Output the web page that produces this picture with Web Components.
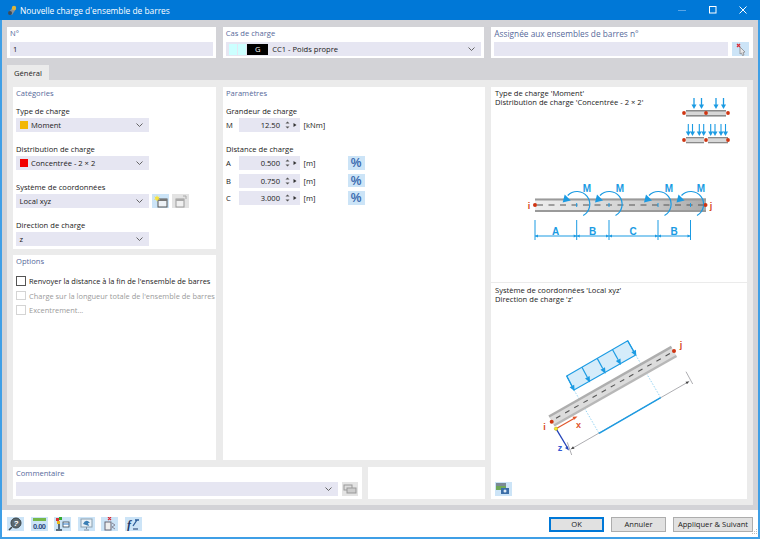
<!DOCTYPE html>
<html lang="fr"><head><meta charset="utf-8"><title>Nouvelle charge</title>
<style>html,body{margin:0;padding:0;width:760px;height:539px;overflow:hidden;background:#fff;font:7.6px "Open Sans","Liberation Sans",sans-serif;color:#1a1a1a}
svg{display:block}</style></head><body>
<x-win>
 <x-card slot="top" heading="N°" style="width:209px"><x-field value="1"></x-field></x-card>
 <x-card slot="top" heading="Cas de charge" style="width:262px">
  <x-combo><x-swatch c="#ccffff" w="8"></x-swatch><x-swatch c="#ccffff" w="8"></x-swatch><x-swatch c="#000" w="21" t="G"></x-swatch><span style="margin-left:3px">CC1 - Poids propre</span></x-combo>
 </x-card>
 <x-card slot="top" heading="Assignée aux ensembles de barres n°" style="width:262px;font-size:8.300px">
  <div style="display:flex;gap:4px"><x-field style="width:234px"></x-field><x-tool w="17" h="14"><svg width="15" height="13" viewBox="0 0 15 13"><path d="M4 1l3 3M7 1L4 4" stroke="#d8303a" stroke-width="1.3"/><path d="M7 4l5 5-2 .5 1 2.5-1.5.5-1-2.5L7 11z" fill="#e8e8ea" stroke="#8a8a8e" stroke-width=".8"/></svg></x-tool></div>
 </x-card>

 <x-card slot="cat" heading="Catégories" style="height:162px" gapless>
  <x-labeled label="Type de charge"><x-combo width="133"><x-swatch c="#f2b705" w="8" h="8"></x-swatch><span style="margin-left:2.500px">Moment</span></x-combo></x-labeled>
  <x-labeled label="Distribution de charge"><x-combo width="133"><x-swatch c="#f20000" w="8" h="8"></x-swatch><span style="margin-left:2.500px">Concentrée - 2 × 2</span></x-combo></x-labeled>
  <x-labeled label="Système de coordonnées"><div style="display:flex;gap:3px"><x-combo width="133"><span>Local xyz</span></x-combo>
    <x-tool w="17" h="14"><svg width="15" height="13" viewBox="0 0 15 13"><rect x="5" y="4" width="9" height="8" fill="#eef2f6" stroke="#555"/><rect x="5" y="4" width="9" height="2" fill="#777"/><path d="M4 0l.8 2 2-.6-1.2 1.8L7 5 5 4.600 4 6.500 3 4.600 1 5l1.400-1.800L1.200 1.400l2 .6z" fill="#f7e33c"/></svg></x-tool>
    <x-tool w="17" h="14" off><svg width="15" height="13" viewBox="0 0 15 13"><rect x="3" y="4" width="8" height="8" fill="#f0f0f0" stroke="#9b9b9b"/><rect x="3" y="4" width="8" height="2" fill="#aaa"/><path d="M10 1h3v3" fill="none" stroke="#aaa"/></svg></x-tool></div></x-labeled>
  <x-labeled label="Direction de charge"><x-combo width="133"><span>z</span></x-combo></x-labeled>
 </x-card>
 <x-card slot="opt" heading="Options" style="flex:1" gapless>
  <div style="display:flex;flex-direction:column;padding-top:1.500px;font-size:7.450px">
  <x-check active>Renvoyer la distance à la fin de l'ensemble de barres</x-check>
  <x-check>Charge sur la longueur totale de l'ensemble de barres</x-check>
  <x-check>Excentrement...</x-check></div>
 </x-card>
 <x-card slot="par" heading="Paramètres" style="flex:1" gapless>
  <x-labeled label="Grandeur de charge"><x-spin sym="M" value="12.50" unit="[kNm]"></x-spin></x-labeled>
  <x-labeled label="Distance de charge"><div style="display:flex;flex-direction:column;gap:3.500px">
   <x-spin sym="A" value="0.500" unit="[m]" pct></x-spin>
   <x-spin sym="B" value="0.750" unit="[m]" pct></x-spin>
   <x-spin sym="C" value="3.000" unit="[m]" pct></x-spin></div></x-labeled>
 </x-card>
 <x-card slot="com" heading="Commentaire" style="width:349px;height:32px">
  <div style="display:flex;gap:4px"><x-combo width="322" style="height:14px"></x-combo><x-tool w="16" h="14" off><svg width="14" height="12" viewBox="0 0 14 12"><rect x="1" y="2" width="8" height="5" fill="#ddd" stroke="#999"/><rect x="4" y="5" width="9" height="5" fill="#ccc" stroke="#999"/></svg></x-tool></div>
 </x-card>
 <x-card slot="com" style="width:117px;height:32px"></x-card>

 <x-load-diagram slot="dia"></x-load-diagram>
 <x-axes-diagram slot="dia"></x-axes-diagram>

 <x-tool slot="foot" w="17" h="14"><svg width="15" height="14" viewBox="0 0 15 14"><circle cx="8" cy="6" r="5" fill="#5c6a70" stroke="#3c464a"/><path d="M4 10l-3 3" stroke="#3c464a" stroke-width="1.600"/><text x="8" y="9" font-family="Liberation Sans" font-weight="700" font-style="italic" font-size="8" fill="#fff" text-anchor="middle">?</text></svg></x-tool>
 <x-tool slot="foot" w="17" h="14"><svg width="15" height="14" viewBox="0 0 15 14"><rect x="1" y="1" width="13" height="3" fill="#76b84a"/><text x="1" y="12" font-family="Liberation Sans" font-weight="700" font-size="7.500" fill="#2d4a80" textLength="13">0.00</text></svg></x-tool>
 <x-tool slot="foot" w="17" h="14"><svg width="15" height="14" viewBox="0 0 15 14"><rect x="1" y="1" width="3" height="3" fill="#d33"/><rect x="4" y="0" width="3" height="3" fill="#3a3"/><rect x="2" y="4" width="3" height="3" fill="#e8b820"/><path d="M4 7v5M1 13h6" stroke="#345" stroke-width="1.500"/><rect x="8" y="5" width="6" height="5" fill="#fff" stroke="#345" stroke-width=".8"/><path d="M8 7h6" stroke="#2a78c8"/></svg></x-tool>
 <x-tool slot="foot" w="17" h="14"><svg width="15" height="14" viewBox="0 0 15 14"><rect x="2" y="2" width="11" height="8" fill="#eaf2f8" stroke="#8ba0b0"/><path d="M4 7q3-6 7-1l-2 0 1 3" fill="#3b7fb5"/><path d="M7.500 10v2M5 13h5" stroke="#8090a0"/></svg></x-tool>
 <x-tool slot="foot" w="17" h="14"><svg width="15" height="14" viewBox="0 0 15 14"><path d="M6 0l3 3M9 0L6 3" stroke="#d82a35" stroke-width="1.200"/><rect x="3" y="5" width="6" height="8" fill="#eee" stroke="#667"/><path d="M10 6l3 2-3 2M10 10l3 2" stroke="#889" fill="none"/></svg></x-tool>
 <x-tool slot="foot" w="17" h="14"><svg width="15" height="14" viewBox="0 0 15 14"><text x="1" y="12" font-family="Liberation Serif" font-style="italic" font-weight="700" font-size="12" fill="#1c3a6a">f</text><path d="M7 9l4-6M9 3h4" stroke="#2b5c98" stroke-width="1.300"/><path d="M7 12h5" stroke="#1c3a6a"/></svg></x-tool>
 <x-button slot="act" w="55" primary>OK</x-button>
 <x-button slot="act" w="55">Annuler</x-button>
 <x-button slot="act" w="80">Appliquer &amp; Suivant</x-button>
</x-win>
<script>
function def(name, css, html, init){
  customElements.define(name, class extends HTMLElement{
    connectedCallback(){
      if(this.shadowRoot) return;
      const r=this.attachShadow({mode:'open'});
      const a=k=>this.getAttribute(k);
      r.innerHTML='<style>'+css+'</style>'+(typeof html==='function'?html(a,this):html);
      if(init) init(r,this);
    }
  });
}
const chevron='<svg width="7" height="4" viewBox="0 0 7 4" style="display:block"><path d="M.5 .5L3.500 3.500 6.500 .5" fill="none" stroke="#555" stroke-width=".9"/></svg>';

def('x-win',`:host{display:flex;flex-direction:column;width:760px;height:539px;box-sizing:border-box;border:2px solid #3f9fe6;border-top:0;background:#d3d3d7}
 .tb{height:20px;margin:0 -2px;background:#0078d7;display:flex;align-items:center;color:#fff;font:8.4px "Open Sans",sans-serif;flex:none}
 .tb .ic{margin:0 3px 0 7px}
 .tb .sp{flex:1}
 .ctl{display:flex;align-items:center}
 .body{flex:1;display:flex;flex-direction:column;padding:7px 5px 0 5px;min-height:0}
 .top{display:flex;gap:7px;height:31px}
 .top ::slotted(:last-child){margin-left:-1px}
 .tabbar{height:15px;margin-top:7px;display:flex;align-items:flex-end}
 .tab{width:42px;height:15px;background:#ebebeb;color:#222;display:flex;align-items:center;justify-content:center}
 .panel{height:425px;background:#ebebeb;padding:7px 6px 6px 6px;box-sizing:border-box;display:flex;gap:6px}
 .left{width:472px;display:flex;flex-direction:column;gap:7px}
 .cols{flex:1;display:flex;gap:7px;min-height:0}
 .c1{width:203px;display:flex;flex-direction:column;gap:6px}
 .c2{flex:1;display:flex}
 .c2 ::slotted(*){flex:1}
 .com{display:flex;gap:6px;height:32px}
 .dia{width:256px;display:flex;flex-direction:column;gap:1px;background:#ebebeb;height:412px}
 .foot{height:27px;margin:5px -5px 0;background:#fff;display:flex;align-items:center;padding:0 5px;box-sizing:border-box;position:relative}
 .tools{display:flex;gap:6.600px;flex:1}
 .acts{display:flex;gap:7px;margin-top:1.500px}
 .grip{position:absolute;right:0;bottom:0}`,
 `<div class="tb"><svg class="ic" width="10" height="11" viewBox="0 0 10 11"><path d="M1 8l5-6 3 2-4 6z" fill="#8a9198"/><circle cx="7" cy="3" r="2.200" fill="#d9b53c"/><circle cx="3" cy="8" r="2" fill="#3a4a5a"/></svg><span>Nouvelle charge d'ensemble de barres</span><span class="sp"></span>
 <div class="ctl"><svg width="76" height="20" viewBox="0 0 76 20"><path d="M0 10.500h8" stroke="#5aa5e6" stroke-width="1"/><rect x="31.500" y="6.500" width="6.500" height="6.500" fill="none" stroke="#fff" stroke-width="1"/><path d="M61.500 6.500l7 7M68.500 6.500l-7 7" stroke="#fff" stroke-width="1"/></svg><span style="width:6px"></span></div></div>
 <div class="body">
  <div class="top"><slot name="top"></slot></div>
  <div class="tabbar"><div class="tab">Général</div></div>
  <div class="panel">
   <div class="left">
    <div class="cols"><div class="c1"><slot name="cat"></slot><slot name="opt"></slot></div><div class="c2"><slot name="par"></slot></div></div>
    <div class="com"><slot name="com"></slot></div>
   </div>
   <div class="dia"><slot name="dia"></slot></div>
  </div>
  <div class="foot"><div class="tools"><slot name="foot"></slot></div><div class="acts"><slot name="act"></slot></div>
   <svg class="grip" width="8" height="8" viewBox="0 0 8 8" fill="#bbb"><rect x="6" y="0" width="1" height="1"/><rect x="4" y="2" width="1" height="1"/><rect x="6" y="2" width="1" height="1"/><rect x="2" y="4" width="1" height="1"/><rect x="4" y="4" width="1" height="1"/><rect x="6" y="4" width="1" height="1"/></svg></div>
 </div>`);

def('x-card',`:host{display:flex;flex-direction:column;background:#fff;padding:0 3px 3px;box-sizing:border-box}
 .h{height:12px;line-height:13px;color:#56699a;white-space:nowrap}
 :host(:not([gapless])) .h{margin-bottom:3px;}
 .w{display:flex;flex-direction:column}
 :host([gapless]) .w{padding-top:5px;gap:10px}`,
 a=>`${a('heading')?`<div class="h">${a('heading')}</div>`:''}<div class="w"><slot></slot></div>`);

def('x-labeled',`:host{display:block}.l{height:13px;line-height:14px;margin-bottom:1px;white-space:nowrap}`,
 a=>`<div class="l">${a('label')}</div><slot></slot>`);

def('x-field',`:host{display:block;height:14px;line-height:14px;background:#e6e6f2;padding-left:3px;box-sizing:border-box}`,
 a=>`${a('value')||''}`);

def('x-combo',`:host{display:flex;align-items:center;height:14px;background:#e6e6f2;box-sizing:border-box;padding:0 6px 0 3.500px;white-space:nowrap}
 .s{flex:1;display:flex;align-items:center;min-width:0}`,
 (a,h)=>{ if(a('width')) h.style.width=a('width')+'px'; return `<div class="s"><slot></slot></div>${chevron}`; });

def('x-swatch',`:host{display:flex;align-items:center;justify-content:center;color:#fff;height:11px;margin-right:1px;flex:none}`,
 (a,h)=>{ h.style.width=a('w')+'px'; h.style.background=a('c'); if(a('h')) h.style.height=a('h')+'px'; return a('t')||''; });

def('x-spin',`:host{display:flex;align-items:center;height:14px;white-space:nowrap}
 .sym{width:13px}
 .box{width:61px;height:14px;background:#e6e6f2;display:flex;align-items:center;box-sizing:border-box;padding-right:2px}
 .v{flex:1;text-align:right}
 .ar{margin-left:4px}
 .u{margin-left:3.500px;width:44px}
 .p{width:17px;height:13.500px;background:#cce4f7;color:#3d6cb0;font:700 12px "Liberation Sans",sans-serif;display:flex;align-items:center;justify-content:center}`,
 a=>`<span class="sym">${a('sym')}</span><div class="box"><span class="v">${a('value')}</span><svg class="ar" width="14" height="10" viewBox="0 0 14 10"><path d="M1.500 3.500L3.500 1.500 5.500 3.500zM1.500 6.500L3.500 8.500 5.500 6.500z" fill="#555"/><path d="M9.500 3l3 2-3 2z" fill="#333"/></svg></div><span class="u">${a('unit')}</span>${a('pct')!==null?'<div class="p">%</div>':''}`);

def('x-check',`:host{display:flex;align-items:center;height:14.700px;gap:3.500px;color:#9a9a9a;white-space:nowrap}
 :host([active]){color:#222}
 .b{width:7.500px;height:7.500px;border:1px solid #d4d4d4;background:#fff;flex:none}
 :host([active]) .b{border-color:#555;}`,`<div class="b"></div><slot></slot>`);

def('x-tool',`:host{display:flex;align-items:center;justify-content:center;background:#cce4f7;flex:none}
 :host([off]){background:#e3e3e3}`,
 (a,h)=>{ h.style.width=a('w')+'px'; h.style.height=a('h')+'px'; return '<slot></slot>'; });

def('x-button',`:host{display:flex;align-items:center;justify-content:center;height:15px;background:#e1e1e1;border:1px solid #adadad;box-sizing:border-box;white-space:nowrap}
 :host([primary]){border:2px solid #0078d7}`,
 (a,h)=>{ h.style.width=a('w')+'px'; return '<slot></slot>'; });

const BL='#1b9be3', RD='#cf3512';
const diaCss=`:host{display:block;position:relative;background:#fff;flex:none}
 .t{position:absolute;left:4px;line-height:9px;white-space:nowrap;color:#222}
 svg{display:block;position:absolute;left:0;top:0}`;
function arrow(x,y1,y2,w){return `<path d="M${x} ${y1}V${y2-3}" stroke="${BL}" stroke-width="${w||1.3}"/><path d="M${x-2.5} ${y2-4.5}h5l-2.500 4.500z" fill="${BL}"/>`}
function moment(x){return `<path d="M${x+6.5} 215.500A12.800 12.800 0 1 0 ${x-9} 195.500" fill="none" stroke="${BL}" stroke-width="1.200"/><path d="M${x-14} 202.500L${x-12} 194.500 ${x-6} 200.500z" fill="${BL}"/>`}
def('x-load-diagram',diaCss+`:host{height:195px}`,()=>{
 const ticks=[535,576.7,609,658,690.5];
 const mid=[[555.5,'A'],[592.5,'B'],[633,'C'],[674,'B']];
 let s=`<svg width="256" height="195" viewBox="491 87 256 195"><defs><linearGradient id="g" x1="0" x2="1" y1="0" y2="0"><stop offset="0" stop-color="#eee"/><stop offset=".6" stop-color="#d0d0d0"/><stop offset="1" stop-color="#aaa"/></linearGradient></defs>`;
 s+=`<rect x="686" y="110" width="40" height="6.500" fill="#d8d8d8"/><rect x="686" y="110" width="40" height="1.500" fill="#8a8a8a"/><rect x="686" y="115" width="40" height="1.500" fill="#8a8a8a"/>`;
 s+=[694,701.5,716,723.5].map(x=>arrow(x,98,109)).join('');
 s+=[684,706,728].map(x=>`<circle cx="${x}" cy="113" r="1.900" fill="${RD}"/>`).join('');
 s+=`<g fill="#d8d8d8"><rect x="686" y="137" width="18" height="6"/><rect x="708" y="137" width="20" height="6"/></g><g fill="#8a8a8a"><rect x="686" y="137" width="18" height="1.300"/><rect x="708" y="137" width="20" height="1.300"/><rect x="686" y="142" width="18" height="1.300"/><rect x="708" y="142" width="20" height="1.300"/></g>`;
 s+=[688.3,692.5,699.3,703.7,710.7,715,721,725.5].map(x=>arrow(x,124,136,1.1)).join('');
 s+=[684,706,728].map(x=>`<circle cx="${x}" cy="140" r="1.900" fill="${RD}"/>`).join('');
 s+=`<rect x="535" y="198.500" width="171" height="13" fill="url(#g)"/><rect x="535" y="198.500" width="171" height="2" fill="#9a9a9a"/><rect x="535" y="210" width="171" height="2" fill="#9a9a9a"/>`;
 s+=`<path d="M537 205H704" stroke="#555" stroke-width="1.100" stroke-dasharray="6 5.500"/>`;
 s+=ticks.slice(1).map(x=>`<path d="M${x} 203v4" stroke="${BL}" stroke-width="1"/>`).join('');
 s+=ticks.slice(1).map(moment).join('');
 s+=`<circle cx="535" cy="205" r="2" fill="${RD}"/><circle cx="705.500" cy="205" r="2" fill="${RD}"/>`;
 s+=`<g font-family="Liberation Sans" font-weight="700" font-size="9" text-anchor="middle" fill="#d9481c"><text x="529" y="208.500">i</text><text x="711" y="208.500">j</text></g>`;
 s+=ticks.map(x=>`<path d="M${x} 220v20" stroke="${BL}" stroke-width="1"/>`).join('');
 s+=`<path d="M535 236H690.500" stroke="${BL}" stroke-width="1"/>`;
 for(let i=0;i<4;i++){const a=ticks[i],b=ticks[i+1]; s+=`<path d="M${a} 236l3-1.500v3zM${b} 236l-3-1.500v3z" fill="${BL}"/>`;}
 s+=`<g font-family="Liberation Sans" font-weight="700" font-size="10" text-anchor="middle" fill="${BL}">`+mid.map(([x,t])=>`<text x="${x}" y="234.500">${t}</text>`).join('')+[587,620,669,701].map(x=>`<text x="${x}" y="191.500">M</text>`).join('')+`</g></svg>`;
 return s+`<div class="t" style="top:1.500px">Type de charge 'Moment'<br>Distribution de charge 'Concentrée - 2 × 2'</div>`;
});
def('x-axes-diagram',diaCss+`:host{height:216px}`,()=>{
 let s=`<svg width="256" height="216" viewBox="491 283 256 216">`;
 const lerp=(a,b,t)=>a+(b-a)*t;
 s+=`<path d="M566.700 376L627.700 340.700 635.700 355 574 390z" fill="#d5ecfa" stroke="${BL}" stroke-width="1.100"/>`;
 for(let i=0;i<5;i++){const t=i/4,x1=lerp(566.7,627.7,t),y1=lerp(376,340.7,t),x2=lerp(574,635.7,t),y2=lerp(390,355,t);
  const ux=.47,uy=.88,px=.88,py=-.47,tx=x2+ux*1.5,ty=y2+uy*1.5,bx=tx-ux*6,by=ty-uy*6;
  s+=`<path d="M${x1} ${y1}L${bx} ${by}" stroke="${BL}" stroke-width="1.200"/><path d="M${tx} ${ty}L${bx+px*2.6} ${by+py*2.6} ${bx-px*2.6} ${by-py*2.6}z" fill="${BL}"/>`;}
 s+=`<path d="M574 390L599 433.300M635.700 355L660.700 397.700" stroke="#7cc9f0" stroke-width=".8" stroke-dasharray="1.500 1.500"/>`;
 s+=`<path d="M551.500 421L674 351.500" stroke="#dcdcdc" stroke-width="10.500"/>`;
 s+=`<path d="M549 416.500L671.500 346.800" stroke="#aeaeae" stroke-width="2.500"/><path d="M554 425.500L676.500 356" stroke="#b8b8b8" stroke-width="2.500"/>`;
 s+=`<path d="M556 418.200L672 352.300" stroke="#555" stroke-width="1.100" stroke-dasharray="5 5.500"/>`;
 s+=`<path d="M570.700 449.300L689.300 381.300" stroke="#aeaeb2" stroke-width="1"/><path d="M599 433.300L660.700 397.700" stroke="${BL}" stroke-width="1.500"/>`;
 s+=`<path d="M567.300 442.300L571.700 455M686 371.700L692.700 384" stroke="#aeaeb2" stroke-width="1"/>`;
 s+=`<path d="M571 449l3.500-.3-1.500-2.500zM689 381.500l-3.500.3 1.500 2.500z" fill="#444"/>`;
 s+=`<path d="M556 428.700L574 418.500" stroke="#e0552a" stroke-width="1.200"/><path d="M577.500 416.500l-5 .3 1.700 3z" fill="#e0552a"/>`;
 s+=`<path d="M556 428.700L567 447" stroke="#2343b8" stroke-width="1.300"/><path d="M569 450.500l-4-2.500 2.800-1.800z" fill="#2343b8"/>`;
 s+=`<circle cx="551.700" cy="421.700" r="2" fill="${RD}"/><circle cx="674" cy="351" r="2" fill="${RD}"/><circle cx="556" cy="428.700" r="1.700" fill="#f2ec2a" stroke="#b0a010" stroke-width=".5"/>`;
 s+=`<g font-family="Liberation Sans" font-weight="700" font-size="9" text-anchor="middle"><text x="544.500" y="429.500" fill="#d9481c">i</text><text x="681" y="347.500" fill="#d9481c">j</text><text x="578.500" y="428" fill="#e0552a">x</text><text x="560" y="451" fill="#3358d4">z</text></g>`;
 s+=`</svg><div class="t" style="top:2.500px">Système de coordonnées 'Local xyz'<br>Direction de charge 'z'</div>`;
 s+=`<x-tool w="17" h="14" style="position:absolute;left:4px;top:198.500px"><svg width="15" height="13" viewBox="0 0 15 13"><rect x="1" y="1" width="10" height="7" fill="#6fa85a"/><rect x="1" y="1" width="10" height="3" fill="#7a8a96"/><rect x="6" y="6" width="8" height="6" fill="#3b6ea8"/><circle cx="10" cy="9" r="1.500" fill="#dfeaf5"/></svg></x-tool>`;
 return s;
});
</script>
</body></html>
